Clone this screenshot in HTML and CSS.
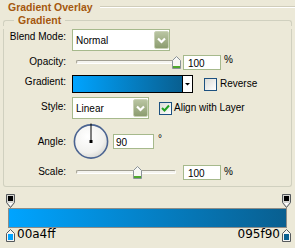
FILE: index.html
```html
<!DOCTYPE html>
<html lang="en">
<head>
  <meta charset="UTF-8" />
  <title>Gradient Overlay</title>
  <link rel="stylesheet" href="styles.css">
</head>
<body>
  <div class="panel">
    <div class="title">
      <h1>Gradient Overlay</h1>
      <span class="rule"></span>
    </div>

    <section class="group">
      <div class="group-head">
        <span class="edge left"></span>
        <h2>Gradient</h2>
        <span class="edge right"></span>
      </div>

      <div class="group-body">
        <div class="row r-blend">
          <span class="lbl">Blend Mode:</span>
          <div class="select blend">
            <span class="val">Normal</span>
            <span class="drop"><svg width="15" height="18" viewBox="0 0 15 18"><path d="M4 7.5 L7.5 11 L11 7.5" fill="none" stroke="#fff" stroke-width="2.2"/></svg></span>
          </div>
        </div>

        <div class="row r-opacity">
          <span class="lbl">Opacity:</span>
          <div class="slider">
            <span class="track"></span>
            <svg class="thumb" style="left:96px" width="9" height="13" viewBox="0 0 9 13"><path d="M0.5 4.5 L4.5 0.5 L8.5 4.5 V12.5 H0.5 Z" fill="#f7f7f4" stroke="#8a9298"/><rect x="1" y="10" width="7" height="2" fill="#4fa82c"/></svg>
          </div>
          <span class="num">100</span>
          <span class="unit">%</span>
        </div>

        <div class="row r-gradient">
          <span class="lbl">Gradient:</span>
          <div class="grad-pick">
            <span class="grad-fill"></span>
            <span class="grad-arrow"><svg width="9" height="16" viewBox="0 0 9 16"><path d="M2 7 H7 L4.5 9.5 Z" fill="#000"/></svg></span>
          </div>
          <span class="check reverse"></span>
          <span class="check-text">Reverse</span>
        </div>

        <div class="row r-style">
          <span class="lbl">Style:</span>
          <div class="select style">
            <span class="val">Linear</span>
            <span class="drop"><svg width="15" height="18" viewBox="0 0 15 18"><path d="M4 7.5 L7.5 11 L11 7.5" fill="none" stroke="#fff" stroke-width="2.2"/></svg></span>
          </div>
          <span class="check align"><svg width="11" height="11" viewBox="0 0 11 11"><path d="M2 5 L4.5 7.5 L9 2.5" fill="none" stroke="#21a121" stroke-width="2"/></svg></span>
          <span class="check-text">Align with Layer</span>
        </div>

        <div class="row r-angle">
          <span class="lbl">Angle:</span>
          <svg class="dial" width="36" height="37" viewBox="0 0 36 37">
            <defs>
              <radialGradient id="dialFill" cx="0.4" cy="0.35" r="0.7">
                <stop offset="0" stop-color="#ffffff"/>
                <stop offset="0.7" stop-color="#f1f1ee"/>
                <stop offset="1" stop-color="#d6d6d0"/>
              </radialGradient>
            </defs>
            <circle cx="18" cy="18.5" r="16.6" fill="url(#dialFill)" stroke="#4b6491" stroke-width="1.6"/>
            <line x1="18" y1="18.5" x2="18" y2="0.5" stroke="#000" stroke-width="1"/>
            <rect x="16.5" y="17" width="3" height="3" fill="#000"/>
          </svg>
          <span class="num angle">90</span>
          <span class="unit deg">°</span>
        </div>

        <div class="row r-scale">
          <span class="lbl">Scale:</span>
          <div class="slider">
            <span class="track"></span>
            <svg class="thumb" style="left:57px" width="9" height="13" viewBox="0 0 9 13"><path d="M0.5 4.5 L4.5 0.5 L8.5 4.5 V12.5 H0.5 Z" fill="#f7f7f4" stroke="#8a9298"/><rect x="1" y="10" width="7" height="2" fill="#4fa82c"/></svg>
          </div>
          <span class="num">100</span>
          <span class="unit">%</span>
        </div>
      </div>
    </section>

    <div class="editor">
      <div class="stops top">
        <svg width="9" height="14" viewBox="0 0 9 14"><path d="M0.5 0.5 H8.5 V8.5 L4.5 13.5 L0.5 8.5 Z" fill="#d4d4d0" stroke="#55595c"/><rect x="2" y="2" width="5" height="5" fill="#000"/><path d="M2 9 H7 L4.5 12 Z" fill="#fff"/></svg>
        <svg width="9" height="14" viewBox="0 0 9 14"><path d="M0.5 0.5 H8.5 V8.5 L4.5 13.5 L0.5 8.5 Z" fill="#d4d4d0" stroke="#55595c"/><rect x="2" y="2" width="5" height="5" fill="#000"/><path d="M2 9 H7 L4.5 12 Z" fill="#fff"/></svg>
      </div>
      <div class="bar"></div>
      <div class="stops bottom">
        <div class="stop-item">
          <svg width="9" height="13" viewBox="0 0 9 13"><path d="M4.5 0.5 L8.5 4.5 V12.5 H0.5 V4.5 Z" fill="#f4f4f2" stroke="#55595c"/><rect x="2" y="5" width="5" height="6" fill="#00a4ff"/></svg>
          <span class="hex">00a4ff</span>
        </div>
        <div class="stop-item">
          <span class="hex">095f90</span>
          <svg width="9" height="13" viewBox="0 0 9 13"><path d="M4.5 0.5 L8.5 4.5 V12.5 H0.5 V4.5 Z" fill="#f4f4f2" stroke="#55595c"/><rect x="2" y="5" width="5" height="6" fill="#095f90"/></svg>
        </div>
      </div>
    </div>
  </div>
</body>
</html>
```

FILE: styles.css
```css
* {
  box-sizing: border-box;
}

body {
  margin: 0;
  background: #ece9d8;
  font-family: 'Liberation Sans', Arial, sans-serif;
  font-size: 10px;
  color: #000;
}

.panel {
  width: 295px;
  height: 248px;
  overflow: hidden;
}

/* section title with rule */
.title {
  display: flex;
  align-items: center;
  height: 14px;
  padding-left: 8px;
}

.title h1 {
  margin: 0;
  font-size: 10.5px;
  line-height: 14px;
  font-weight: bold;
  color: #a5580e;
}

.title .rule {
  flex: 1;
  margin-left: 7px;
  margin-top: -1px;
  border-top: 1px solid #d0cdbb;
  border-bottom: 1px solid #fff;
}

/* group box */
.group {
  margin: 0 3px;
}

.group-head {
  display: flex;
  height: 12px;
}

.group-head h2 {
  margin: 0;
  padding: 0 4px;
  font-size: 10.5px;
  line-height: 12px;
  font-weight: bold;
  color: #a5580e;
}

.edge {
  align-self: flex-end;
  height: 6px;
  border-top: 1px solid #d0d0bf;
}

.edge.left {
  width: 11px;
  border-left: 1px solid #d0d0bf;
  border-top-left-radius: 3px;
}

.edge.right {
  flex: 1;
  border-right: 1px solid #d0d0bf;
  border-top-right-radius: 3px;
}

.group-body {
  padding: 0 0 6px;
  border: 1px solid #d0d0bf;
  border-top: 0;
  border-radius: 0 0 3px 3px;
}

.row {
  display: flex;
  align-items: center;
}

.lbl {
  align-self: flex-start;
  width: 62px;
  margin-right: 6px;
  text-align: right;
  line-height: 12px;
}

.r-blend { margin-top: 3px; height: 22px; }
.r-opacity { margin-top: 1px; height: 20px; }
.r-gradient { margin-top: 3px; height: 18px; }
.r-style { margin-top: 4px; height: 22px; }
.r-angle { margin-top: 4px; height: 37px; }
.r-scale { margin-top: 4px; height: 16px; }

.r-blend .lbl { padding-top: 2px; }
.r-opacity .lbl { padding-top: 4px; }
.r-gradient .lbl { padding-top: 1px; }
.r-style .lbl { padding-top: 4px; }
.r-angle .lbl { padding-top: 13px; }
.r-scale .lbl { padding-top: 2px; }

/* select boxes */
.select {
  display: flex;
  align-items: center;
  height: 22px;
  padding: 1px 0;
  border: 1px solid #a6b98c;
  background: #fff;
}

.select.blend { width: 98px; }
.select.style { width: 77px; }

.select .val {
  flex: 1;
  padding: 2px 0 0 3px;
  line-height: 12px;
}

.drop {
  display: block;
  width: 15px;
  height: 18px;
  border: 1px solid #c9d2b6;
  border-radius: 2px;
  background: linear-gradient(#b9c5a2, #8c9d70);
}

.drop svg {
  display: block;
  margin: -1px;
}

/* sliders */
.slider {
  position: relative;
  display: flex;
  align-items: center;
  width: 100px;
  height: 13px;
  margin-left: 4px;
}

.track {
  flex: 1;
  height: 4px;
  border: 1px solid;
  border-color: #a19f92 #fff #fff #a19f92;
  border-radius: 2px;
  background: #f4f3ee;
}

.thumb {
  position: absolute;
  top: 0;
}

.num {
  width: 38px;
  height: 15px;
  margin-left: 7px;
  padding: 2px 0 0 4px;
  border: 1px solid #a6b98c;
  background: #fff;
  line-height: 11px;
}

.num.angle {
  width: 41px;
  margin-left: 4px;
  padding-left: 2px;
}

.unit {
  align-self: flex-start;
  margin-left: 3px;
  padding-top: 2px;
  line-height: 12px;
}

.unit.deg {
  padding-top: 10px;
  margin-left: 4px;
}

/* gradient picker */
.grad-pick {
  display: flex;
  width: 121px;
  height: 18px;
  border: 1px solid #000;
  background: #fff;
}

.grad-fill {
  flex: 1;
  border-right: 1px solid #000;
  background: linear-gradient(to right, #00a4ff, #095f90);
}

.grad-arrow {
  width: 9px;
}

.grad-arrow svg {
  display: block;
}

/* checkboxes */
.check {
  display: block;
  width: 13px;
  height: 13px;
  border: 1px solid #1c5180;
  background: linear-gradient(135deg, #dcdcd7, #fff);
}

.check svg {
  display: block;
}

.check.reverse { margin-left: 11px; }
.check.align { margin-left: 10px; }

.check-text {
  margin-left: 3px;
  line-height: 12px;
}

.check.align + .check-text { margin-left: 2px; }

.dial {
  display: block;
  margin-left: 1px;
}

/* gradient editor */
.editor {
  margin: 7px 4px 0 6px;
}

.stops {
  display: flex;
  justify-content: space-between;
}

.stops svg {
  display: block;
}

.bar {
  height: 20px;
  margin: 0 4px 0 2px;
  border: 1px solid #8d8d88;
  background: linear-gradient(to right, #00a4ff, #095f90);
}

.stops.bottom {
  margin-top: 1px;
}

.stop-item {
  display: flex;
  align-items: flex-start;
  gap: 2px;
}

.hex {
  font-family: 'DejaVu Sans', sans-serif;
  font-size: 12px;
  line-height: 13px;
  margin-top: -1px;
}
```
